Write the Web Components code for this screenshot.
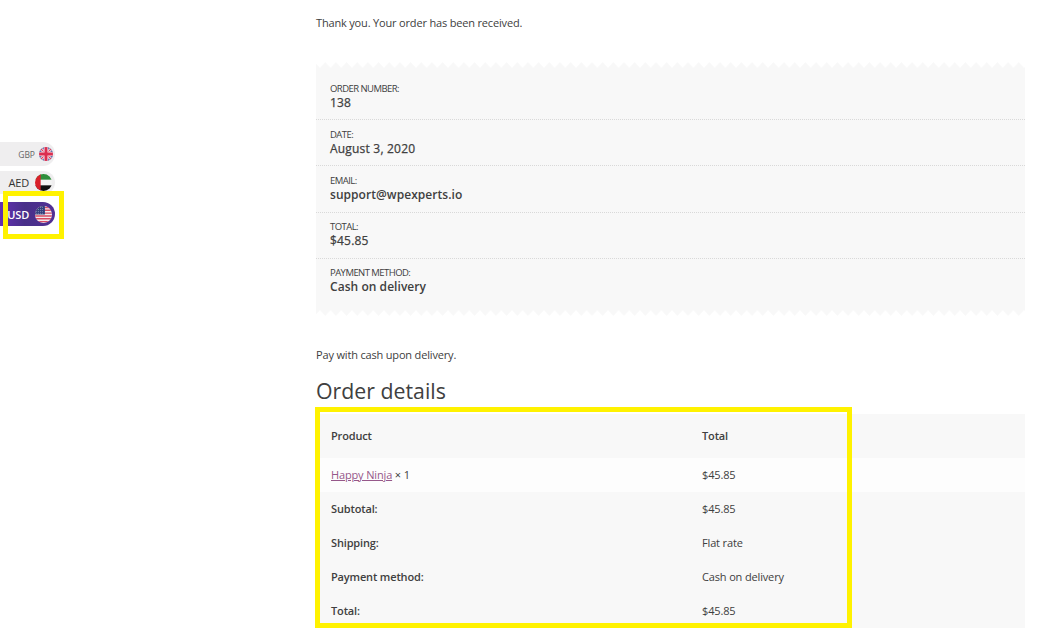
<!DOCTYPE html>
<html>
<head>
<meta charset="utf-8">
<title>Order received</title>
<style>
  html, body { margin: 0; padding: 0; background: #fff; height: 629px; overflow: hidden; }
  body { font-family: "Open Sans", sans-serif; color: #404040; position: relative; }
</style>
</head>
<body>
<order-page>
  <currency-switcher slot="side">
    <currency-pill code="GBP" flag="gb" small></currency-pill>
    <currency-pill code="AED" flag="ae"></currency-pill>
    <currency-pill code="USD" flag="us" active></currency-pill>
  </currency-switcher>

  <order-overview slot="overview">
    <overview-item label="Order number:" value="138"></overview-item>
    <overview-item label="Date:" value="August 3, 2020"></overview-item>
    <overview-item label="Email:" value="support@wpexperts.io" strong></overview-item>
    <overview-item label="Total:" value="$45.85"></overview-item>
    <overview-item label="Payment method:" value="Cash on delivery" strong></overview-item>
  </order-overview>

  <order-table slot="table">
    <order-row kind="head" label="Product" value="Total"></order-row>
    <order-row kind="item" value="$45.85"><a slot="label" href="#">Happy Ninja</a></order-row>
    <order-row label="Subtotal:" value="$45.85"></order-row>
    <order-row label="Shipping:" value="Flat rate"></order-row>
    <order-row label="Payment method:" value="Cash on delivery"></order-row>
    <order-row label="Total:" value="$45.85"></order-row>
  </order-table>

  <yellow-box slot="marks" style="left:3px;top:191px;width:61px;height:48px"></yellow-box>
  <yellow-box slot="marks" style="left:315px;top:407px;width:537px;height:221px"></yellow-box>
</order-page>

<script>
const flags = {
  gb: `<rect width="24" height="24" fill="#3a4a94"/>
    <path d="M0 0L24 24M24 0L0 24" stroke="#f3e6ea" stroke-width="5"/>
    <path d="M0 0L24 24M24 0L0 24" stroke="#dc3a58" stroke-width="2"/>
    <path d="M12 0v24M0 12h24" stroke="#f3e6ea" stroke-width="8"/>
    <path d="M12 0v24M0 12h24" stroke="#dc2f50" stroke-width="5"/>`,
  ae: `<rect width="24" height="24" fill="#f4f4f4"/>
    <rect width="24" height="8" fill="#2f8f3c"/>
    <rect y="16" width="24" height="8" fill="#111"/>
    <rect width="8" height="24" fill="#d9202a"/>`,
  us: `<rect width="24" height="24" fill="#f3ecef"/>
    <path d="M0 2h24M0 6h24M0 10h24M0 14h24M0 18h24M0 22h24" stroke="#d84a63" stroke-width="2"/>
    <rect width="14" height="12" fill="#33407e"/>
    <path d="M2 2h10M2 5h10M2 8h10M2 11h10" stroke="#cfd2e2" stroke-width="1" stroke-dasharray="1 1.6"/>`
};

customElements.define("order-page", class extends HTMLElement {
  constructor() {
    super();
    this.attachShadow({ mode: "open" });
    this.shadowRoot.innerHTML = `
      <style>
        :host { display: block; }
        main { width: 709px; margin-left: 316px; padding-top: 15px; }
        p { margin: 0; font-size: 11px; line-height: 16px; letter-spacing: -.17px; }
        .thanks { margin-bottom: 31px; }
        .pay { margin-top: 31px; }
        h2 { margin: 12px 0 7px; font-size: 21.3px; line-height: 32px; font-weight: 400; color: #404040; }
      </style>
      <slot name="side"></slot>
      <main>
        <p class="thanks">Thank you. Your order has been received.</p>
        <slot name="overview"></slot>
        <p class="pay">Pay with cash upon delivery.</p>
        <h2>Order details</h2>
        <slot name="table"></slot>
      </main>
      <slot name="marks"></slot>
    `;
  }
});

customElements.define("currency-switcher", class extends HTMLElement {
  constructor() {
    super();
    this.attachShadow({ mode: "open" });
    this.shadowRoot.innerHTML = `
      <style>
        :host { display: flex; flex-direction: column; position: absolute; left: 0; top: 142px; gap: 5px; width: 55px; }
      </style>
      <slot></slot>
    `;
  }
});

customElements.define("currency-pill", class extends HTMLElement {
  constructor() {
    super();
    this.attachShadow({ mode: "open" });
  }

  connectedCallback() {
    const flag = flags[this.getAttribute("flag")];
    const id = "c" + this.getAttribute("flag");
    this.shadowRoot.innerHTML = `
      <style>
        :host { display: flex; align-items: center; justify-content: flex-end; height: 23px; box-sizing: border-box;
          padding-right: 3px; gap: 6px; background: #efeeef; border-radius: 0 12px 12px 0; font-size: 11px; color: #333; letter-spacing: -.2px; }
        :host([small]) { font-size: 8.5px; color: #666; height: 24px; gap: 4px; padding-right: 2px; letter-spacing: 0; }
        :host([small]) svg { width: 14px; height: 14px; }
        :host([active]) { margin-top: 3px; background: linear-gradient(90deg, #6430b4 0, #483089 45%, #523095 100%); color: #fff; font-weight: 600; height: 24px; }
        svg { width: 17px; height: 17px; display: block; }
      </style>
      <span>${this.getAttribute("code")}</span>
      <svg viewBox="0 0 24 24"><clipPath id="${id}"><circle cx="12" cy="12" r="12"/></clipPath><g clip-path="url(#${id})">${flag}</g></svg>
    `;
  }
});

customElements.define("zig-zag", class extends HTMLElement {
  constructor() {
    super();
    this.attachShadow({ mode: "open" });
  }

  connectedCallback() {
    const down = this.hasAttribute("down");
    const d = down ? "M0 0L5.33 6L10.67 0Z" : "M0 6L5.33 0L10.67 6Z";
    this.shadowRoot.innerHTML = `
      <style>:host { display: block; height: 6px; } svg { display: block; width: 100%; height: 6px; }</style>
      <svg>
        <defs><pattern id="z" width="10.67" height="6" patternUnits="userSpaceOnUse" patternTransform="translate(3.9 0)">
          <path d="${d}" fill="#f8f8f8"/>
        </pattern></defs>
        <rect width="100%" height="6" fill="url(#z)"/>
      </svg>
    `;
  }
});

customElements.define("order-overview", class extends HTMLElement {
  constructor() {
    super();
    this.attachShadow({ mode: "open" });
    this.shadowRoot.innerHTML = `
      <style>
        :host { display: block; }
        .box { background: #f8f8f8; padding: 6px 0 5px; }
      </style>
      <zig-zag></zig-zag>
      <div class="box"><slot></slot></div>
      <zig-zag down></zig-zag>
    `;
  }
});

customElements.define("overview-item", class extends HTMLElement {
  constructor() {
    super();
    this.attachShadow({ mode: "open" });
  }

  connectedCallback() {
    this.shadowRoot.innerHTML = `
      <style>
        :host { display: block; height: 46.2px; box-sizing: border-box; padding: 8.6px 14px 0; border-bottom: 1px dotted #d9d9d9; }
        :host(:last-child) { border-bottom: 0; }
        .l { font-size: 9.5px; line-height: 12px; text-transform: uppercase; letter-spacing: -.55px; color: #404040; }
        .v { font-size: 12px; line-height: 16px; font-weight: 400; -webkit-text-stroke: .25px #404040; letter-spacing: .2px; color: #404040; }
        :host([strong]) .v { font-weight: 600; -webkit-text-stroke: 0; letter-spacing: .05px; }
      </style>
      <div class="l">${this.getAttribute("label")}</div>
      <div class="v">${this.getAttribute("value")}</div>
    `;
  }
});

customElements.define("order-table", class extends HTMLElement {
  constructor() {
    super();
    this.attachShadow({ mode: "open" });
    this.shadowRoot.innerHTML = `
      <style>:host { display: block; background: #f8f8f8; }</style>
      <slot></slot>
    `;
  }
});

customElements.define("order-row", class extends HTMLElement {
  constructor() {
    super();
    this.attachShadow({ mode: "open" });
  }

  connectedCallback() {
    const kind = this.getAttribute("kind");
    const label = this.getAttribute("label");
    this.shadowRoot.innerHTML = `
      <style>
        :host { display: grid; grid-template-columns: 386px 1fr; align-items: center; height: 34px; box-sizing: border-box; padding-bottom: 1px;
          font-size: 11px; letter-spacing: -.15px; color: #404040; }
        :host([kind=head]) { height: 44px; }
        :host([kind=item]) { background: #fdfdfd; }
        .a { padding-left: 15px; font-weight: 600; }
        :host([kind=item]) .a { font-weight: 400; }
        .b { font-weight: 400; }
        :host([kind=head]) .b { font-weight: 600; }
        .q { font-weight: 500; }
        ::slotted(a) { color: #96588a; text-decoration: underline; font-weight: 400; }
      </style>
      <div class="a">${kind === "item" ? '<slot name="label"></slot> <span class="q">× 1</span>' : label}</div>
      <div class="b">${this.getAttribute("value")}</div>
    `;
  }
});

customElements.define("yellow-box", class extends HTMLElement {
  constructor() {
    super();
    this.attachShadow({ mode: "open" });
    this.shadowRoot.innerHTML = `
      <style>:host { display: block; position: absolute; box-sizing: border-box; border: 5px solid #fff200; }</style>
    `;
  }
});
</script>
</body>
</html>
